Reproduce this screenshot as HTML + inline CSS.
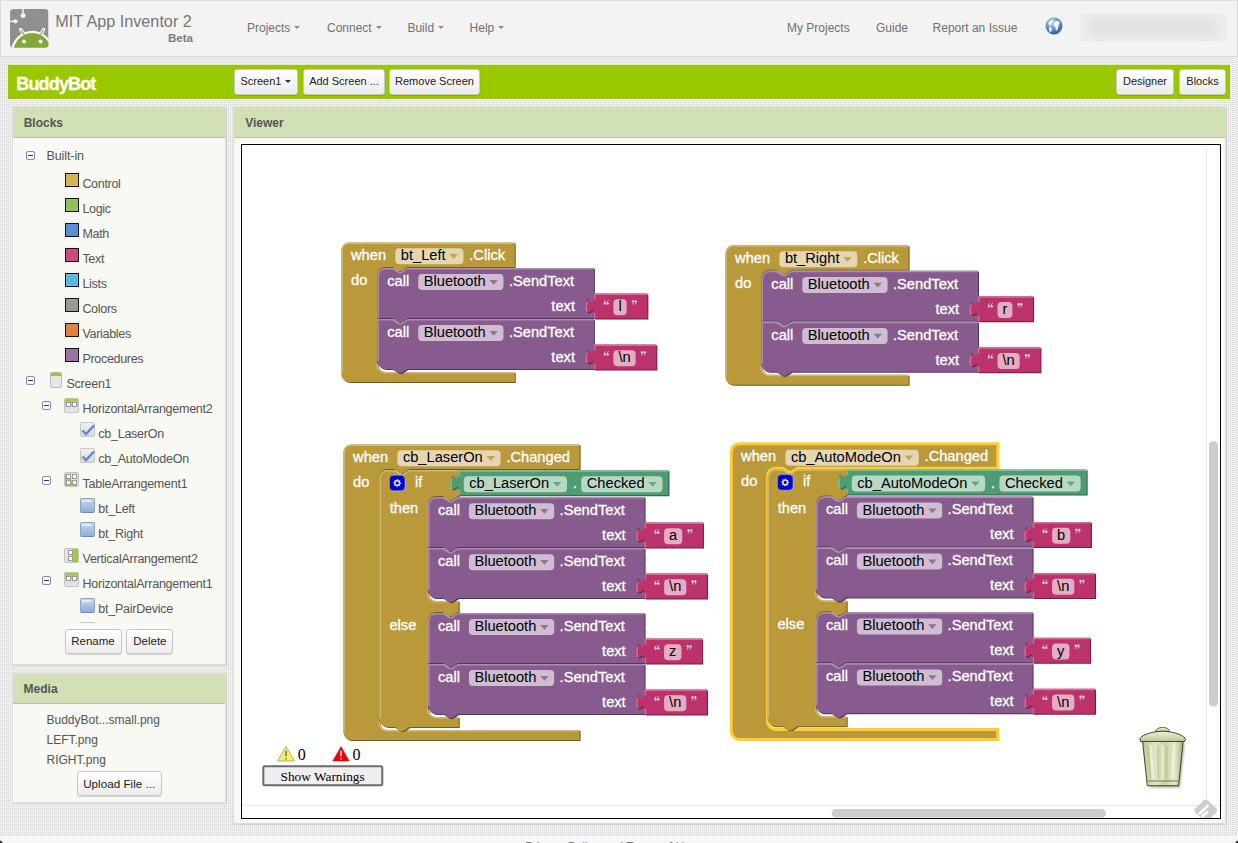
<!DOCTYPE html>
<html><head><meta charset="utf-8">
<style>
*{box-sizing:border-box;margin:0;padding:0}
html,body{width:1238px;height:843px;overflow:hidden}
body{position:relative;font-family:"Liberation Sans", sans-serif;background-color:#d6d6d6;
background-image:linear-gradient(90deg,transparent 50%,#f0f0f0 50%),linear-gradient(transparent 50%,#f0f0f0 50%);
background-size:2px 2px,2px 2px}
.a{position:absolute}
.t{position:absolute;white-space:pre;line-height:1}
.btn{position:absolute;text-align:center;color:#222;background:linear-gradient(#fff,#ececec);border:1px solid #c8c8c8;border-radius:3px;box-shadow:0 1px 1px rgba(0,0,0,.15);white-space:pre}
.caret{display:inline-block;width:0;height:0;border-left:3.5px solid transparent;border-right:3.5px solid transparent;border-top:3.5px solid #888;vertical-align:middle;margin-left:4px;margin-top:-2px}
.btn .caret{border-top-color:#333;border-left-width:3px;border-right-width:3px;border-top-width:3px}
</style></head><body>

<div class="a" style="left:0;top:0;width:1238px;height:57px;background:#f3f3f3;border:1px solid #d9d9d9;border-top-color:#e2e2e2"></div>
<svg class="a" style="left:9.5px;top:9.3px" width="39" height="39" viewBox="0 0 39 39">
<defs><clipPath id="lc"><rect x="0" y="0" width="38.5" height="38.7" rx="3.5"/></clipPath></defs>
<g clip-path="url(#lc)">
<rect x="0" y="0" width="38.5" height="38.7" fill="#8f8f90"/>
<path d="M0.6 11 V3 a2.4 2.4 0 0 1 2.4 -2.4 H10.8 a1.2 1.2 0 0 1 1.2 1.2 V11.2" fill="none" stroke="#a2a2a3" stroke-width="0.7" opacity="0.8"/>
<rect x="12.3" y="-1" width="1.5" height="6" fill="#efefef"/><circle cx="13.05" cy="6.4" r="2.5" fill="#efefef"/>
<rect x="-1" y="11.6" width="5" height="1.5" fill="#efefef"/><circle cx="5.5" cy="12.35" r="2.1" fill="#efefef"/>
<circle cx="22.3" cy="42.9" r="21.1" fill="#fff"/>
<path d="M10.7 20.5 L14.2 25.5 M33.6 20.5 L30.7 25.5" stroke="#fff" stroke-width="3.4" stroke-linecap="round"/>
<path d="M10.9 20.8 L14.2 25.5 M33.4 20.8 L30.7 25.5" stroke="#86a83a" stroke-width="1.2" stroke-linecap="round"/>
<circle cx="22.3" cy="42.9" r="18.85" fill="#86a83a"/>
<circle cx="14" cy="32.5" r="1.9" fill="#fff"/><circle cx="30.6" cy="32.5" r="1.9" fill="#fff"/>
</g></svg>
<div class="t" style="left:55.3px;top:13.39px;font-size:16.2px;color:#777;font-weight:400;">MIT App Inventor 2</div>
<div class="t" style="left:168px;top:33.04px;font-size:12px;color:#7a7a7a;font-weight:700;font-size:11.5px">Beta</div>
<div class="t" style="left:247px;top:21.84px;font-size:12px;color:#707070;font-weight:400;">Projects<span class="caret"></span></div>
<div class="t" style="left:327px;top:21.84px;font-size:12px;color:#707070;font-weight:400;">Connect<span class="caret"></span></div>
<div class="t" style="left:407.4px;top:21.84px;font-size:12px;color:#707070;font-weight:400;">Build<span class="caret"></span></div>
<div class="t" style="left:469.6px;top:21.84px;font-size:12px;color:#707070;font-weight:400;">Help<span class="caret"></span></div>
<div class="t" style="left:787px;top:21.84px;font-size:12px;color:#707070;font-weight:400;">My Projects</div>
<div class="t" style="left:876px;top:21.84px;font-size:12px;color:#707070;font-weight:400;">Guide</div>
<div class="t" style="left:932.6px;top:21.84px;font-size:12px;color:#707070;font-weight:400;">Report an Issue</div>
<svg class="a" style="left:1044.5px;top:17px" width="18" height="18" viewBox="0 0 18 18">
<defs><radialGradient id="gg" cx="0.4" cy="0.3" r="0.75"><stop offset="0" stop-color="#bcd6f2"/><stop offset="0.55" stop-color="#5f90cf"/><stop offset="1" stop-color="#2c5a9a"/></radialGradient></defs>
<circle cx="9" cy="9" r="8.4" fill="url(#gg)"/>
<path d="M3.2,6.5 C4.5,3.6 7,2.3 8.6,2.6 C8.2,4 7.8,4.6 6.6,5.2 C6,6.6 6.6,7.8 5.6,8.3 C4.6,8.6 3.8,8 3.2,6.5Z" fill="#fff" opacity="0.95"/>
<path d="M9.6,5 C11,3.4 13.4,3.6 14.6,5.2 C15.2,6.6 13.6,7 13.2,8.6 C13.6,10.6 12.4,12.6 11.4,13.8 C10.6,12.6 10.8,10.8 10,9.6 C8.6,9.4 8.4,7.6 9.2,6.8Z" fill="#fff" opacity="0.95"/>
<path d="M4,10.2 C5.6,9.8 7,10.8 7,12.6 C6.6,14.2 5.4,15.2 4.8,15.6 C4.6,14 3.6,12.6 4,10.2Z" fill="#fff" opacity="0.9"/>
<ellipse cx="9" cy="16.6" rx="5" ry="0.9" fill="#000" opacity="0.12"/>
</svg>
<div class="a" style="left:1080px;top:14px;width:146px;height:27px;background:#ececec;border-radius:1px"></div>
<div class="a" style="left:1090px;top:20px;width:126px;height:15px;background:#e0e0e0;border-radius:6px;filter:blur(4px)"></div>
<div class="a" style="left:8px;top:65px;width:1222px;height:34px;background:#9ac800"></div>
<div class="t" style="left:16.3px;top:74.56px;font-size:18px;color:#fff;font-weight:700;letter-spacing:-0.85px;-webkit-text-stroke:0.3px #fff">BuddyBot</div>
<div class="btn" style="left:234px;top:69px;width:64px;height:26px;font-size:11px;line-height:22.5px;">Screen1<span class="caret"></span></div>
<div class="btn" style="left:303px;top:69px;width:82px;height:26px;font-size:11px;line-height:22.5px;">Add Screen ...</div>
<div class="btn" style="left:389px;top:69px;width:91px;height:26px;font-size:11px;line-height:22.5px;">Remove Screen</div>
<div class="btn" style="left:1116px;top:69px;width:58px;height:26px;font-size:11px;line-height:22.5px;">Designer</div>
<div class="btn" style="left:1179px;top:69px;width:47px;height:26px;font-size:11px;line-height:22.5px;">Blocks</div>
<div class="a" style="left:12px;top:107px;width:214px;height:558px;background:#f7f9f2;border:1px solid #dcdcdc;box-shadow:1px 1px 1px rgba(0,0,0,.08)"></div>
<div class="a" style="left:13px;top:107px;width:212px;height:31px;background:#d1e0b5;border-bottom:1px solid #b9bfae"></div>
<div class="t" style="left:23.7px;top:116.54px;font-size:12px;color:#555;font-weight:700;">Blocks</div>
<div class="a" style="left:26px;top:151px;width:9px;height:9px;border:1px solid #7d87c9;border-radius:2px;background:#fff"></div><div class="a" style="left:28px;top:155px;width:5px;height:1px;background:#1a2ad0"></div>
<div class="t" style="left:46.5px;top:149.92px;font-size:12.5px;color:#555;font-weight:400;letter-spacing:-0.1px">Built-in</div>
<div class="a" style="left:65px;top:173px;width:14px;height:14px;background:#d8b454;border:1px solid #111"></div>
<div class="t" style="left:82.4px;top:177.92px;font-size:12.5px;color:#555;font-weight:400;letter-spacing:-0.3px">Control</div>
<div class="a" style="left:65px;top:198px;width:14px;height:14px;background:#92c05c;border:1px solid #111"></div>
<div class="t" style="left:82.4px;top:202.92px;font-size:12.5px;color:#555;font-weight:400;letter-spacing:-0.3px">Logic</div>
<div class="a" style="left:65px;top:223px;width:14px;height:14px;background:#5b8ed0;border:1px solid #111"></div>
<div class="t" style="left:82.4px;top:227.92px;font-size:12.5px;color:#555;font-weight:400;letter-spacing:-0.3px">Math</div>
<div class="a" style="left:65px;top:248px;width:14px;height:14px;background:#cc4a7c;border:1px solid #111"></div>
<div class="t" style="left:82.4px;top:252.92px;font-size:12.5px;color:#555;font-weight:400;letter-spacing:-0.3px">Text</div>
<div class="a" style="left:65px;top:273px;width:14px;height:14px;background:#5bb8e0;border:1px solid #111"></div>
<div class="t" style="left:82.4px;top:277.92px;font-size:12.5px;color:#555;font-weight:400;letter-spacing:-0.3px">Lists</div>
<div class="a" style="left:65px;top:298px;width:14px;height:14px;background:#999999;border:1px solid #111"></div>
<div class="t" style="left:82.4px;top:302.92px;font-size:12.5px;color:#555;font-weight:400;letter-spacing:-0.3px">Colors</div>
<div class="a" style="left:65px;top:323px;width:14px;height:14px;background:#e0823e;border:1px solid #111"></div>
<div class="t" style="left:82.4px;top:327.92px;font-size:12.5px;color:#555;font-weight:400;letter-spacing:-0.3px">Variables</div>
<div class="a" style="left:65px;top:348px;width:14px;height:14px;background:#9a72a4;border:1px solid #111"></div>
<div class="t" style="left:82.4px;top:352.92px;font-size:12.5px;color:#555;font-weight:400;letter-spacing:-0.3px">Procedures</div>
<div class="a" style="left:26px;top:376px;width:9px;height:9px;border:1px solid #7d87c9;border-radius:2px;background:#fff"></div><div class="a" style="left:28px;top:380px;width:5px;height:1px;background:#1a2ad0"></div>
<div class="a" style="left:50px;top:372px;width:12px;height:16px;border:1px solid #bbb;border-radius:2px;background:linear-gradient(#9ac43c 0,#9ac43c 3px,#e6e6e6 3px)"></div>
<div class="t" style="left:66.5px;top:377.92px;font-size:12.5px;color:#555;font-weight:400;letter-spacing:-0.25px">Screen1</div>
<div class="a" style="left:42px;top:401px;width:9px;height:9px;border:1px solid #7d87c9;border-radius:2px;background:#fff"></div><div class="a" style="left:44px;top:405px;width:5px;height:1px;background:#1a2ad0"></div>
<div class="a" style="left:64px;top:398px;width:15px;height:15px;border:1px solid #c2c2c2;border-radius:2px;background:linear-gradient(#9fcb3a,#bcd97a 7px,#dcdcdc 7px,#e8e8e8)"></div><div class="a" style="left:66px;top:402px;width:5px;height:5px;background:#fff;border:1px solid #9a9a9a"></div><div class="a" style="left:72px;top:402px;width:5px;height:5px;background:#fff;border:1px solid #9a9a9a"></div>
<div class="t" style="left:82.5px;top:402.92px;font-size:12.5px;color:#555;font-weight:400;letter-spacing:-0.25px">HorizontalArrangement2</div>
<div class="a" style="left:80px;top:422px;width:15px;height:15px;border:1px solid #c6c6c6;border-radius:2px;background:linear-gradient(#f0f0f0,#d8d8d8)"></div><svg class="a" style="left:80px;top:422px" width="16" height="16"><path d="M2.5 8.5 L6 12 L14 3.5" stroke="#5a86cc" stroke-width="2.4" fill="none"/></svg>
<div class="t" style="left:98.3px;top:427.92px;font-size:12.5px;color:#555;font-weight:400;letter-spacing:-0.25px">cb_LaserOn</div>
<div class="a" style="left:80px;top:448px;width:15px;height:15px;border:1px solid #c6c6c6;border-radius:2px;background:linear-gradient(#f0f0f0,#d8d8d8)"></div><svg class="a" style="left:80px;top:448px" width="16" height="16"><path d="M2.5 8.5 L6 12 L14 3.5" stroke="#5a86cc" stroke-width="2.4" fill="none"/></svg>
<div class="t" style="left:98.3px;top:452.92px;font-size:12.5px;color:#555;font-weight:400;letter-spacing:-0.25px">cb_AutoModeOn</div>
<div class="a" style="left:42px;top:476px;width:9px;height:9px;border:1px solid #7d87c9;border-radius:2px;background:#fff"></div><div class="a" style="left:44px;top:480px;width:5px;height:1px;background:#1a2ad0"></div>
<div class="a" style="left:64px;top:472px;width:15px;height:15px;border:1px solid #c2c2c2;border-radius:2px;background:linear-gradient(45deg,#9fcb3a 50%,#dedede 50%)"></div><div class="a" style="left:66px;top:474px;width:5px;height:5px;background:#fff;border:1px solid #9a9a9a"></div><div class="a" style="left:72px;top:474px;width:5px;height:5px;background:#fff;border:1px solid #9a9a9a"></div><div class="a" style="left:66px;top:480px;width:5px;height:5px;background:#fff;border:1px solid #9a9a9a"></div><div class="a" style="left:72px;top:480px;width:5px;height:5px;background:#fff;border:1px solid #9a9a9a"></div>
<div class="t" style="left:82.5px;top:477.92px;font-size:12.5px;color:#555;font-weight:400;letter-spacing:-0.25px">TableArrangement1</div>
<div class="a" style="left:80px;top:498px;width:15px;height:15px;border:1px solid #8ea3c2;border-bottom-color:#6d8bb8;border-radius:2px;background:linear-gradient(#c6d6ee,#a9c2e6 50%,#8eaedc)"></div><div class="a" style="left:82px;top:500px;width:9px;height:2px;background:#e6eef9;opacity:.9"></div>
<div class="t" style="left:98.3px;top:502.92px;font-size:12.5px;color:#555;font-weight:400;letter-spacing:-0.25px">bt_Left</div>
<div class="a" style="left:80px;top:522px;width:15px;height:15px;border:1px solid #8ea3c2;border-bottom-color:#6d8bb8;border-radius:2px;background:linear-gradient(#c6d6ee,#a9c2e6 50%,#8eaedc)"></div><div class="a" style="left:82px;top:524px;width:9px;height:2px;background:#e6eef9;opacity:.9"></div>
<div class="t" style="left:98.3px;top:527.92px;font-size:12.5px;color:#555;font-weight:400;letter-spacing:-0.25px">bt_Right</div>
<div class="a" style="left:64px;top:548px;width:15px;height:15px;border:1px solid #c2c2c2;border-radius:2px;background:linear-gradient(90deg,#e4e4e4,#d8d8d8 7px,#a6cf45 7px,#9fcb3a)"></div><div class="a" style="left:68px;top:550px;width:5px;height:5px;background:#fff;border:1px solid #9a9a9a"></div><div class="a" style="left:68px;top:556px;width:5px;height:5px;background:#fff;border:1px solid #9a9a9a"></div>
<div class="t" style="left:82.5px;top:552.92px;font-size:12.5px;color:#555;font-weight:400;letter-spacing:-0.25px">VerticalArrangement2</div>
<div class="a" style="left:42px;top:576px;width:9px;height:9px;border:1px solid #7d87c9;border-radius:2px;background:#fff"></div><div class="a" style="left:44px;top:580px;width:5px;height:1px;background:#1a2ad0"></div>
<div class="a" style="left:64px;top:572px;width:15px;height:15px;border:1px solid #c2c2c2;border-radius:2px;background:linear-gradient(#9fcb3a,#bcd97a 7px,#dcdcdc 7px,#e8e8e8)"></div><div class="a" style="left:66px;top:576px;width:5px;height:5px;background:#fff;border:1px solid #9a9a9a"></div><div class="a" style="left:72px;top:576px;width:5px;height:5px;background:#fff;border:1px solid #9a9a9a"></div>
<div class="t" style="left:82.5px;top:577.92px;font-size:12.5px;color:#555;font-weight:400;letter-spacing:-0.25px">HorizontalArrangement1</div>
<div class="a" style="left:80px;top:598px;width:15px;height:15px;border:1px solid #8ea3c2;border-bottom-color:#6d8bb8;border-radius:2px;background:linear-gradient(#c6d6ee,#a9c2e6 50%,#8eaedc)"></div><div class="a" style="left:82px;top:600px;width:9px;height:2px;background:#e6eef9;opacity:.9"></div>
<div class="t" style="left:98.3px;top:602.92px;font-size:12.5px;color:#555;font-weight:400;letter-spacing:-0.25px">bt_PairDevice</div>
<div class="a" style="left:80px;top:622px;width:15px;height:2px;border:1px solid #c6c6c6;border-bottom:none;border-radius:3px 3px 0 0"></div>
<div class="btn" style="left:64.5px;top:628.5px;width:57px;height:25px;font-size:11.5px;line-height:21.5px;padding-top:1px">Rename</div>
<div class="btn" style="left:126.4px;top:628.5px;width:47px;height:25px;font-size:11.5px;line-height:21.5px;padding-top:1px">Delete</div>
<div class="a" style="left:12px;top:673px;width:214px;height:130px;background:#f7f9f2;border:1px solid #dcdcdc;box-shadow:1px 1px 1px rgba(0,0,0,.08)"></div>
<div class="a" style="left:13px;top:674px;width:212px;height:30px;background:#d1e0b5;border-bottom:1px solid #b9bfae"></div>
<div class="t" style="left:23.6px;top:682.84px;font-size:12px;color:#555;font-weight:700;">Media</div>
<div class="t" style="left:46.5px;top:714.24px;font-size:12px;color:#555;font-weight:400;">BuddyBot...small.png</div>
<div class="t" style="left:46.5px;top:734.14px;font-size:12px;color:#555;font-weight:400;">LEFT.png</div>
<div class="t" style="left:46.5px;top:753.64px;font-size:12px;color:#555;font-weight:400;">RIGHT.png</div>
<div class="btn" style="left:76.7px;top:770.6px;width:85px;height:25px;font-size:11.7px;line-height:21.5px;padding-top:1px">Upload File ...</div>
<div class="a" style="left:233px;top:107px;width:993px;height:717px;background:#f7f9f2;border:1px solid #dcdcdc;box-shadow:1px 1px 1px rgba(0,0,0,.08)"></div>
<div class="a" style="left:234px;top:107px;width:991px;height:31px;background:#d1e0b5;border-bottom:1px solid #b9bfae"></div>
<div class="t" style="left:245.2px;top:116.54px;font-size:12px;color:#555;font-weight:700;">Viewer</div>
<div class="a" style="left:241px;top:144px;width:980px;height:675px;background:#fff;border:1px solid #000;box-shadow:0 0 0 1px #fff;overflow:hidden">
<svg class="a" style="left:0;top:0" width="978" height="673"><g transform="translate(-242,-145)" style="font-family:'Liberation Sans',sans-serif;font-size:14.667px"><path d="M243,805.5 H1220 M1206.5,146 V805.5" stroke="#e6e6e6" stroke-width="1" fill="none"/><rect x="1209" y="441" width="9" height="265.5" rx="4.5" fill="#cccccc"/><rect x="831.8" y="809" width="274.2" height="8.5" rx="4.25" fill="#cccccc"/><g transform="translate(1205.8,810.5)"><path d="M-2,-10.2 Q0,-11.8 2,-10.2 L10.6,-2 Q12.4,0 10.6,2 L2,10.2 Q0,11.8 -2,10.2 L-10.6,2 Q-12.4,0 -10.6,-2Z" fill="#cdcdcd"/><path d="M-6.3,3.2 L1.8,-4.6 M-3,5.8 L1.2,1.8" stroke="#fff" stroke-width="2.6" stroke-linecap="round" fill="none"/></g><g>
<defs>
<linearGradient id="tb" x1="0" x2="1" y1="0" y2="0"><stop offset="0" stop-color="#b9c48f"/><stop offset="0.3" stop-color="#dfe6c6"/><stop offset="0.55" stop-color="#c9d3a6"/><stop offset="0.8" stop-color="#e3e9cc"/><stop offset="1" stop-color="#aab47c"/></linearGradient>
<linearGradient id="tl" x1="0" x2="0" y1="0" y2="1"><stop offset="0" stop-color="#eef2dd"/><stop offset="1" stop-color="#bcc792"/></linearGradient>
<filter id="ts" x="-20%" y="-20%" width="150%" height="150%"><feGaussianBlur stdDeviation="1"/></filter>
</defs>
<path d="M1143.5,743 L1184.5,743 L1180,787.5 L1149.5,787.5Z" fill="#000" opacity="0.35" filter="url(#ts)"/>
<path d="M1142.6,741.2 L1183.1,741.2 L1178.5,785.7 L1147.3,785.7Z" fill="url(#tb)" stroke="#3f4b1e" stroke-width="1"/>
<path d="M1148,781 H1178" stroke="#56622f" stroke-width="0.8"/>
<path d="M1150.5,746 L1153,778 M1162.6,746 V779 M1174,746 L1172,778" stroke="#f4f7e8" stroke-width="2.2" opacity="0.7" stroke-linecap="round"/>
<path d="M1148,746 L1150.5,778 M1158,746 L1158.5,779 M1167,746 L1166.8,779" stroke="#a9b47c" stroke-width="1.2" opacity="0.6"/>
<path d="M1155.5,731.5 C1156,726 1169,726 1169.5,731.5Z" fill="url(#tl)" stroke="#3f4b1e" stroke-width="0.8"/>
<path d="M1140,739 C1140,736 1150,731.5 1162.5,731.2 C1175,731.5 1185.5,736 1185.5,739.5 L1184.6,741.5 H1140.5Z" fill="url(#tl)" stroke="#3f4b1e" stroke-width="1"/>
</g><path d="M286,746.5 L294.3,761 H277.6Z" fill="#f3f36b" stroke="#9c9c4a" stroke-width="0.8" stroke-linejoin="round"/><path d="M286,750.5 V756.5 M286,758 V759.5" stroke="#7a4b4b" stroke-width="1.3"/><text x="297.8" y="760" style="font-family:'Liberation Serif',serif;font-size:16px" fill="#000">0</text><path d="M341,746.7 L349.2,761 H332.8Z" fill="#f20000" stroke="#d00" stroke-width="0.6" stroke-linejoin="round"/><path d="M341,750.5 V756.5 M341,758 V759.5" stroke="#f3dede" stroke-width="1.5"/><text x="352.4" y="760" style="font-family:'Liberation Serif',serif;font-size:16px" fill="#000">0</text><rect x="263.3" y="766.2" width="119" height="19" rx="1.5" fill="#efefef" stroke="#6b6b6b" stroke-width="2"/><text x="280.5" y="781.2" style="font-family:'Liberation Serif',serif;font-size:13.333px" fill="#000">Show Warnings</text><g transform="translate(341.2,242.4)"><path transform="translate(1,1)" fill="#6F5C23" d="M 0,8 A 8,8 0 0,1 8,0 H 173.5 V 24.5 H 66.2 l -6,4 -3,0 -6,-4 h -7 a 8,8 0 0,0 -8,8 V 121.5 a 8,8 0 0,0 8,8 H 173.5 V 139.5 H 8 a 8,8 0 0,1 -8,-8 z"/><path fill="#B9993A" d="M 0,8 A 8,8 0 0,1 8,0 H 173.5 V 24.5 H 66.2 l -6,4 -3,0 -6,-4 h -7 a 8,8 0 0,0 -8,8 V 121.5 a 8,8 0 0,0 8,8 H 173.5 V 139.5 H 8 a 8,8 0 0,1 -8,-8 z"/><path fill="none" stroke="#CEB875" stroke-width="1.5" d="M 0.75,131.5 V 8 A 7.25,7.25 0 0,1 8,0.75 H 173 M 35.45,121.5 a 8.75,8.75 0 0,0 8.75,8.75 H 173"/><text x="9.8" y="17.6" fill="#fff" stroke="#fff" stroke-width="0.3">when</text><rect x="54.1" y="5.9" width="68.15" height="16" rx="4" ry="4" fill="#fff" fill-opacity="0.6"/><text x="59.6" y="17.9" fill="#000">bt_Left</text><path d="M108.25,11.7 h8.4 l-4.2,4.8 z" fill="#B9993A" fill-opacity="0.8"/><text x="128.05" y="17.6" fill="#fff" stroke="#fff" stroke-width="0.3">.Click</text><text x="9.8" y="42.5" fill="#fff" stroke="#fff" stroke-width="0.3">do</text></g><g transform="translate(377.4,267.9)"><path transform="translate(1,1)" fill="#513755" d="M 0,8 A 8,8 0 0,1 8,0 H 15 l 6,4 3,0 6,-4 H 216.5 V 25 v 5 c 0,10 -8,-8 -8,7.5 s 8,-2.5 8,7.5 V 50 H 30 l -6,4 -3,0 -6,-4 H 0 z"/><path fill="#875B8D" d="M 0,8 A 8,8 0 0,1 8,0 H 15 l 6,4 3,0 6,-4 H 216.5 V 25 v 5 c 0,10 -8,-8 -8,7.5 s 8,-2.5 8,7.5 V 50 H 30 l -6,4 -3,0 -6,-4 H 0 z"/><path fill="none" stroke="#AB8DAF" stroke-width="1.5" d="M 0.75,50 V 8 A 7.25,7.25 0 0,1 8,0.75 H 15 l 6.5,4 2,0 6.5,-4 H 216.0"/><text x="9.8" y="18" fill="#fff" stroke="#fff" stroke-width="0.3">call</text><rect x="40.8" y="6.2" width="85.28" height="16" rx="4" ry="4" fill="#fff" fill-opacity="0.6"/><text x="46.3" y="18.2" fill="#000">Bluetooth</text><path d="M112.08,12 h8.4 l-4.2,4.8 z" fill="#875B8D" fill-opacity="0.8"/><text x="131.5" y="18" fill="#fff" stroke="#fff" stroke-width="0.3">.SendText</text><text x="173.96" y="43" fill="#fff" stroke="#fff" stroke-width="0.3">text</text></g><g transform="translate(593.9,293.4)"><path transform="translate(1,1)" fill="#711F40" d="M 0,0 H 53.46 V 25 H 0 V 20 c 0,-10 -8,8 -8,-7.5 s 8,2.5 8,-7.5 z"/><path fill="#BC336B" d="M 0,0 H 53.46 V 25 H 0 V 20 c 0,-10 -8,8 -8,-7.5 s 8,2.5 8,-7.5 z"/><path fill="none" stroke="#D07097" stroke-width="1.5" d="M 0.75,24.5 V 19.5 M -7.1,18.5 q -1.3,-5 0.2,-10 M 0.75,6 V 0.75 H 52.96"/><g fill="#fff" stroke="#fff" opacity="0.92"><circle cx="11.1" cy="10.2" r="1.05" stroke="none"/><path d="M10.2,10.1 Q10.2,7.7 11.8,7" stroke-width="0.8" fill="none"/><circle cx="13.9" cy="10.2" r="1.05" stroke="none"/><path d="M13,10.1 Q13,7.7 14.6,7" stroke-width="0.8" fill="none"/></g><rect x="19.5" y="5.8" width="13.26" height="16" rx="4" ry="4" fill="#fff" fill-opacity="0.6"/><text x="24.5" y="17.8" fill="#000">l</text><g fill="#fff" stroke="#fff" opacity="0.92"><circle cx="38.86" cy="7.85" r="1.05" stroke="none"/><path d="M39.76,7.9 Q39.76,10.3 38.16,11" stroke-width="0.8" fill="none"/><circle cx="41.66" cy="7.85" r="1.05" stroke="none"/><path d="M42.56,7.9 Q42.56,10.3 40.96,11" stroke-width="0.8" fill="none"/></g></g><g transform="translate(377.4,318.9)"><path transform="translate(1,1)" fill="#513755" d="M 0,0 H 15 l 6,4 3,0 6,-4 H 216.5 V 25 v 5 c 0,10 -8,-8 -8,7.5 s 8,-2.5 8,7.5 V 50 H 30 l -6,4 -3,0 -6,-4 H 8 a 8,8 0 0,1 -8,-8 z"/><path fill="#875B8D" d="M 0,0 H 15 l 6,4 3,0 6,-4 H 216.5 V 25 v 5 c 0,10 -8,-8 -8,7.5 s 8,-2.5 8,7.5 V 50 H 30 l -6,4 -3,0 -6,-4 H 8 a 8,8 0 0,1 -8,-8 z"/><path fill="none" stroke="#AB8DAF" stroke-width="1.5" d="M 0.75,42 V 0.75 H 15 l 6.5,4 2,0 6.5,-4 H 216.0"/><text x="9.8" y="18" fill="#fff" stroke="#fff" stroke-width="0.3">call</text><rect x="40.8" y="6.2" width="85.28" height="16" rx="4" ry="4" fill="#fff" fill-opacity="0.6"/><text x="46.3" y="18.2" fill="#000">Bluetooth</text><path d="M112.08,12 h8.4 l-4.2,4.8 z" fill="#875B8D" fill-opacity="0.8"/><text x="131.5" y="18" fill="#fff" stroke="#fff" stroke-width="0.3">.SendText</text><text x="173.96" y="43" fill="#fff" stroke="#fff" stroke-width="0.3">text</text></g><g transform="translate(593.9,344.4)"><path transform="translate(1,1)" fill="#711F40" d="M 0,0 H 62.43 V 25 H 0 V 20 c 0,-10 -8,8 -8,-7.5 s 8,2.5 8,-7.5 z"/><path fill="#BC336B" d="M 0,0 H 62.43 V 25 H 0 V 20 c 0,-10 -8,8 -8,-7.5 s 8,2.5 8,-7.5 z"/><path fill="none" stroke="#D07097" stroke-width="1.5" d="M 0.75,24.5 V 19.5 M -7.1,18.5 q -1.3,-5 0.2,-10 M 0.75,6 V 0.75 H 61.93"/><g fill="#fff" stroke="#fff" opacity="0.92"><circle cx="11.1" cy="10.2" r="1.05" stroke="none"/><path d="M10.2,10.1 Q10.2,7.7 11.8,7" stroke-width="0.8" fill="none"/><circle cx="13.9" cy="10.2" r="1.05" stroke="none"/><path d="M13,10.1 Q13,7.7 14.6,7" stroke-width="0.8" fill="none"/></g><rect x="19.5" y="5.8" width="22.23" height="16" rx="4" ry="4" fill="#fff" fill-opacity="0.6"/><text x="24.5" y="17.8" fill="#000">\n</text><g fill="#fff" stroke="#fff" opacity="0.92"><circle cx="47.83" cy="7.85" r="1.05" stroke="none"/><path d="M48.73,7.9 Q48.73,10.3 47.13,11" stroke-width="0.8" fill="none"/><circle cx="50.63" cy="7.85" r="1.05" stroke="none"/><path d="M51.53,7.9 Q51.53,10.3 49.93,11" stroke-width="0.8" fill="none"/></g></g><g transform="translate(725.3,245.3)"><path transform="translate(1,1)" fill="#6F5C23" d="M 0,8 A 8,8 0 0,1 8,0 H 183.28 V 24.5 H 66.2 l -6,4 -3,0 -6,-4 h -7 a 8,8 0 0,0 -8,8 V 121.5 a 8,8 0 0,0 8,8 H 183.28 V 139.5 H 8 a 8,8 0 0,1 -8,-8 z"/><path fill="#B9993A" d="M 0,8 A 8,8 0 0,1 8,0 H 183.28 V 24.5 H 66.2 l -6,4 -3,0 -6,-4 h -7 a 8,8 0 0,0 -8,8 V 121.5 a 8,8 0 0,0 8,8 H 183.28 V 139.5 H 8 a 8,8 0 0,1 -8,-8 z"/><path fill="none" stroke="#CEB875" stroke-width="1.5" d="M 0.75,131.5 V 8 A 7.25,7.25 0 0,1 8,0.75 H 182.78 M 35.45,121.5 a 8.75,8.75 0 0,0 8.75,8.75 H 182.78"/><text x="9.8" y="17.6" fill="#fff" stroke="#fff" stroke-width="0.3">when</text><rect x="54.1" y="5.9" width="77.93" height="16" rx="4" ry="4" fill="#fff" fill-opacity="0.6"/><text x="59.6" y="17.9" fill="#000">bt_Right</text><path d="M118.03,11.7 h8.4 l-4.2,4.8 z" fill="#B9993A" fill-opacity="0.8"/><text x="137.83" y="17.6" fill="#fff" stroke="#fff" stroke-width="0.3">.Click</text><text x="9.8" y="42.5" fill="#fff" stroke="#fff" stroke-width="0.3">do</text></g><g transform="translate(761.5,270.8)"><path transform="translate(1,1)" fill="#513755" d="M 0,8 A 8,8 0 0,1 8,0 H 15 l 6,4 3,0 6,-4 H 216.5 V 25 v 5 c 0,10 -8,-8 -8,7.5 s 8,-2.5 8,7.5 V 50 H 30 l -6,4 -3,0 -6,-4 H 0 z"/><path fill="#875B8D" d="M 0,8 A 8,8 0 0,1 8,0 H 15 l 6,4 3,0 6,-4 H 216.5 V 25 v 5 c 0,10 -8,-8 -8,7.5 s 8,-2.5 8,7.5 V 50 H 30 l -6,4 -3,0 -6,-4 H 0 z"/><path fill="none" stroke="#AB8DAF" stroke-width="1.5" d="M 0.75,50 V 8 A 7.25,7.25 0 0,1 8,0.75 H 15 l 6.5,4 2,0 6.5,-4 H 216.0"/><text x="9.8" y="18" fill="#fff" stroke="#fff" stroke-width="0.3">call</text><rect x="40.8" y="6.2" width="85.28" height="16" rx="4" ry="4" fill="#fff" fill-opacity="0.6"/><text x="46.3" y="18.2" fill="#000">Bluetooth</text><path d="M112.08,12 h8.4 l-4.2,4.8 z" fill="#875B8D" fill-opacity="0.8"/><text x="131.5" y="18" fill="#fff" stroke="#fff" stroke-width="0.3">.SendText</text><text x="173.96" y="43" fill="#fff" stroke="#fff" stroke-width="0.3">text</text></g><g transform="translate(978,296.3)"><path transform="translate(1,1)" fill="#711F40" d="M 0,0 H 55.08 V 25 H 0 V 20 c 0,-10 -8,8 -8,-7.5 s 8,2.5 8,-7.5 z"/><path fill="#BC336B" d="M 0,0 H 55.08 V 25 H 0 V 20 c 0,-10 -8,8 -8,-7.5 s 8,2.5 8,-7.5 z"/><path fill="none" stroke="#D07097" stroke-width="1.5" d="M 0.75,24.5 V 19.5 M -7.1,18.5 q -1.3,-5 0.2,-10 M 0.75,6 V 0.75 H 54.58"/><g fill="#fff" stroke="#fff" opacity="0.92"><circle cx="11.1" cy="10.2" r="1.05" stroke="none"/><path d="M10.2,10.1 Q10.2,7.7 11.8,7" stroke-width="0.8" fill="none"/><circle cx="13.9" cy="10.2" r="1.05" stroke="none"/><path d="M13,10.1 Q13,7.7 14.6,7" stroke-width="0.8" fill="none"/></g><rect x="19.5" y="5.8" width="14.88" height="16" rx="4" ry="4" fill="#fff" fill-opacity="0.6"/><text x="24.5" y="17.8" fill="#000">r</text><g fill="#fff" stroke="#fff" opacity="0.92"><circle cx="40.48" cy="7.85" r="1.05" stroke="none"/><path d="M41.38,7.9 Q41.38,10.3 39.78,11" stroke-width="0.8" fill="none"/><circle cx="43.28" cy="7.85" r="1.05" stroke="none"/><path d="M44.18,7.9 Q44.18,10.3 42.58,11" stroke-width="0.8" fill="none"/></g></g><g transform="translate(761.5,321.8)"><path transform="translate(1,1)" fill="#513755" d="M 0,0 H 15 l 6,4 3,0 6,-4 H 216.5 V 25 v 5 c 0,10 -8,-8 -8,7.5 s 8,-2.5 8,7.5 V 50 H 30 l -6,4 -3,0 -6,-4 H 8 a 8,8 0 0,1 -8,-8 z"/><path fill="#875B8D" d="M 0,0 H 15 l 6,4 3,0 6,-4 H 216.5 V 25 v 5 c 0,10 -8,-8 -8,7.5 s 8,-2.5 8,7.5 V 50 H 30 l -6,4 -3,0 -6,-4 H 8 a 8,8 0 0,1 -8,-8 z"/><path fill="none" stroke="#AB8DAF" stroke-width="1.5" d="M 0.75,42 V 0.75 H 15 l 6.5,4 2,0 6.5,-4 H 216.0"/><text x="9.8" y="18" fill="#fff" stroke="#fff" stroke-width="0.3">call</text><rect x="40.8" y="6.2" width="85.28" height="16" rx="4" ry="4" fill="#fff" fill-opacity="0.6"/><text x="46.3" y="18.2" fill="#000">Bluetooth</text><path d="M112.08,12 h8.4 l-4.2,4.8 z" fill="#875B8D" fill-opacity="0.8"/><text x="131.5" y="18" fill="#fff" stroke="#fff" stroke-width="0.3">.SendText</text><text x="173.96" y="43" fill="#fff" stroke="#fff" stroke-width="0.3">text</text></g><g transform="translate(978,347.3)"><path transform="translate(1,1)" fill="#711F40" d="M 0,0 H 62.43 V 25 H 0 V 20 c 0,-10 -8,8 -8,-7.5 s 8,2.5 8,-7.5 z"/><path fill="#BC336B" d="M 0,0 H 62.43 V 25 H 0 V 20 c 0,-10 -8,8 -8,-7.5 s 8,2.5 8,-7.5 z"/><path fill="none" stroke="#D07097" stroke-width="1.5" d="M 0.75,24.5 V 19.5 M -7.1,18.5 q -1.3,-5 0.2,-10 M 0.75,6 V 0.75 H 61.93"/><g fill="#fff" stroke="#fff" opacity="0.92"><circle cx="11.1" cy="10.2" r="1.05" stroke="none"/><path d="M10.2,10.1 Q10.2,7.7 11.8,7" stroke-width="0.8" fill="none"/><circle cx="13.9" cy="10.2" r="1.05" stroke="none"/><path d="M13,10.1 Q13,7.7 14.6,7" stroke-width="0.8" fill="none"/></g><rect x="19.5" y="5.8" width="22.23" height="16" rx="4" ry="4" fill="#fff" fill-opacity="0.6"/><text x="24.5" y="17.8" fill="#000">\n</text><g fill="#fff" stroke="#fff" opacity="0.92"><circle cx="47.83" cy="7.85" r="1.05" stroke="none"/><path d="M48.73,7.9 Q48.73,10.3 47.13,11" stroke-width="0.8" fill="none"/><circle cx="50.63" cy="7.85" r="1.05" stroke="none"/><path d="M51.53,7.9 Q51.53,10.3 49.93,11" stroke-width="0.8" fill="none"/></g></g><g transform="translate(343.3,444.4)"><path transform="translate(1,1)" fill="#6F5C23" d="M 0,8 A 8,8 0 0,1 8,0 H 236.31 V 24.5 H 66.2 l -6,4 -3,0 -6,-4 h -7 a 8,8 0 0,0 -8,8 V 277.6 a 8,8 0 0,0 8,8 H 236.31 V 295.6 H 8 a 8,8 0 0,1 -8,-8 z"/><path fill="#B9993A" d="M 0,8 A 8,8 0 0,1 8,0 H 236.31 V 24.5 H 66.2 l -6,4 -3,0 -6,-4 h -7 a 8,8 0 0,0 -8,8 V 277.6 a 8,8 0 0,0 8,8 H 236.31 V 295.6 H 8 a 8,8 0 0,1 -8,-8 z"/><path fill="none" stroke="#CEB875" stroke-width="1.5" d="M 0.75,287.6 V 8 A 7.25,7.25 0 0,1 8,0.75 H 235.81 M 35.45,277.6 a 8.75,8.75 0 0,0 8.75,8.75 H 235.81"/><text x="9.8" y="17.6" fill="#fff" stroke="#fff" stroke-width="0.3">when</text><rect x="54.1" y="5.9" width="103.2" height="16" rx="4" ry="4" fill="#fff" fill-opacity="0.6"/><text x="59.6" y="17.9" fill="#000">cb_LaserOn</text><path d="M143.3,11.7 h8.4 l-4.2,4.8 z" fill="#B9993A" fill-opacity="0.8"/><text x="163.1" y="17.6" fill="#fff" stroke="#fff" stroke-width="0.3">.Changed</text><text x="9.8" y="42.5" fill="#fff" stroke="#fff" stroke-width="0.3">do</text></g><g transform="translate(379.5,469.9)"><path transform="translate(1,1)" fill="#6F5C23" d="M 0,8 A 8,8 0 0,1 8,0 H 15 l 6,4 3,0 6,-4 H 79.2 v 5 c 0,10 -8,-8 -8,7.5 s 8,-2.5 8,7.5 V 26.1 H 78.6 l -6,4 -3,0 -6,-4 h -7 a 8,8 0 0,0 -8,8 V 123.1 a 8,8 0 0,0 8,8 H 79.2 V 142 H 78.6 l -6,4 -3,0 -6,-4 h -7 a 8,8 0 0,0 -8,8 V 239 a 8,8 0 0,0 8,8 H 79.2 V 257 H 30 l -6,4 -3,0 -6,-4 H 8 a 8,8 0 0,1 -8,-8 z"/><path fill="#B9993A" d="M 0,8 A 8,8 0 0,1 8,0 H 15 l 6,4 3,0 6,-4 H 79.2 v 5 c 0,10 -8,-8 -8,7.5 s 8,-2.5 8,7.5 V 26.1 H 78.6 l -6,4 -3,0 -6,-4 h -7 a 8,8 0 0,0 -8,8 V 123.1 a 8,8 0 0,0 8,8 H 79.2 V 142 H 78.6 l -6,4 -3,0 -6,-4 h -7 a 8,8 0 0,0 -8,8 V 239 a 8,8 0 0,0 8,8 H 79.2 V 257 H 30 l -6,4 -3,0 -6,-4 H 8 a 8,8 0 0,1 -8,-8 z"/><path fill="none" stroke="#CEB875" stroke-width="1.5" d="M 0.75,249 V 8 A 7.25,7.25 0 0,1 8,0.75 H 15 l 6.5,4 2,0 6.5,-4 H 78.7 M 47.85,123.1 a 8.75,8.75 0 0,0 8.75,8.75 H 78.7 M 47.85,239 a 8.75,8.75 0 0,0 8.75,8.75 H 78.7"/><rect x="9.9" y="5.3" width="15.6" height="15.6" rx="4" ry="4" fill="#0000d0" stroke="#fff" stroke-opacity="0.35" stroke-width="1"/><path d="M17.70,9.20 L18.46,9.27 L18.85,10.33 L19.37,10.61 L20.46,10.34 L20.94,10.93 L20.47,11.95 L20.64,12.51 L21.60,13.10 L21.53,13.86 L20.47,14.25 L20.19,14.77 L20.46,15.86 L19.87,16.34 L18.85,15.87 L18.29,16.04 L17.70,17.00 L16.94,16.93 L16.55,15.87 L16.03,15.59 L14.94,15.86 L14.46,15.27 L14.93,14.25 L14.76,13.69 L13.80,13.10 L13.87,12.34 L14.93,11.95 L15.21,11.43 L14.94,10.34 L15.53,9.86 L16.55,10.33 L17.11,10.16Z M19.30,13.10 A1.6,1.6 0 1,0 16.10,13.10 A1.6,1.6 0 1,0 19.30,13.10Z" fill="#fff" fill-rule="evenodd" opacity="0.9"/><text x="35.6" y="17" fill="#fff" stroke="#fff" stroke-width="0.3">if</text><text x="10.2" y="43.5" fill="#fff" stroke="#fff" stroke-width="0.3">then</text><text x="9.9" y="159.8" fill="#fff" stroke="#fff" stroke-width="0.3">else</text></g><g transform="translate(458.7,470.2)"><path transform="translate(1,1)" fill="#2F5E44" d="M 0,0 H 209.77 V 25 H 0 V 20 c 0,-10 -8,8 -8,-7.5 s 8,2.5 8,-7.5 z"/><path fill="#4E9D72" d="M 0,0 H 209.77 V 25 H 0 V 20 c 0,-10 -8,8 -8,-7.5 s 8,2.5 8,-7.5 z"/><path fill="none" stroke="#83BA9C" stroke-width="1.5" d="M 0.75,24.5 V 19.5 M -7.1,18.5 q -1.3,-5 0.2,-10 M 0.75,6 V 0.75 H 209.27"/><rect x="5.1" y="6" width="103.2" height="16" rx="4" ry="4" fill="#fff" fill-opacity="0.6"/><text x="10.6" y="18" fill="#000">cb_LaserOn</text><path d="M94.3,11.8 h8.4 l-4.2,4.8 z" fill="#4E9D72" fill-opacity="0.8"/><text x="114.2" y="18" fill="#fff" stroke="#fff" stroke-width="0.3">.</text><rect x="122.58" y="6" width="81.19" height="16" rx="4" ry="4" fill="#fff" fill-opacity="0.6"/><text x="128.08" y="18" fill="#000">Checked</text><path d="M189.77,11.8 h8.4 l-4.2,4.8 z" fill="#4E9D72" fill-opacity="0.8"/></g><g transform="translate(428.1,497)"><path transform="translate(1,1)" fill="#513755" d="M 0,8 A 8,8 0 0,1 8,0 H 15 l 6,4 3,0 6,-4 H 216.5 V 25 v 5 c 0,10 -8,-8 -8,7.5 s 8,-2.5 8,7.5 V 50 H 30 l -6,4 -3,0 -6,-4 H 0 z"/><path fill="#875B8D" d="M 0,8 A 8,8 0 0,1 8,0 H 15 l 6,4 3,0 6,-4 H 216.5 V 25 v 5 c 0,10 -8,-8 -8,7.5 s 8,-2.5 8,7.5 V 50 H 30 l -6,4 -3,0 -6,-4 H 0 z"/><path fill="none" stroke="#AB8DAF" stroke-width="1.5" d="M 0.75,50 V 8 A 7.25,7.25 0 0,1 8,0.75 H 15 l 6.5,4 2,0 6.5,-4 H 216.0"/><text x="9.8" y="18" fill="#fff" stroke="#fff" stroke-width="0.3">call</text><rect x="40.8" y="6.2" width="85.28" height="16" rx="4" ry="4" fill="#fff" fill-opacity="0.6"/><text x="46.3" y="18.2" fill="#000">Bluetooth</text><path d="M112.08,12 h8.4 l-4.2,4.8 z" fill="#875B8D" fill-opacity="0.8"/><text x="131.5" y="18" fill="#fff" stroke="#fff" stroke-width="0.3">.SendText</text><text x="173.96" y="43" fill="#fff" stroke="#fff" stroke-width="0.3">text</text></g><g transform="translate(644.6,522.5)"><path transform="translate(1,1)" fill="#711F40" d="M 0,0 H 58.36 V 25 H 0 V 20 c 0,-10 -8,8 -8,-7.5 s 8,2.5 8,-7.5 z"/><path fill="#BC336B" d="M 0,0 H 58.36 V 25 H 0 V 20 c 0,-10 -8,8 -8,-7.5 s 8,2.5 8,-7.5 z"/><path fill="none" stroke="#D07097" stroke-width="1.5" d="M 0.75,24.5 V 19.5 M -7.1,18.5 q -1.3,-5 0.2,-10 M 0.75,6 V 0.75 H 57.86"/><g fill="#fff" stroke="#fff" opacity="0.92"><circle cx="11.1" cy="10.2" r="1.05" stroke="none"/><path d="M10.2,10.1 Q10.2,7.7 11.8,7" stroke-width="0.8" fill="none"/><circle cx="13.9" cy="10.2" r="1.05" stroke="none"/><path d="M13,10.1 Q13,7.7 14.6,7" stroke-width="0.8" fill="none"/></g><rect x="19.5" y="5.8" width="18.16" height="16" rx="4" ry="4" fill="#fff" fill-opacity="0.6"/><text x="24.5" y="17.8" fill="#000">a</text><g fill="#fff" stroke="#fff" opacity="0.92"><circle cx="43.76" cy="7.85" r="1.05" stroke="none"/><path d="M44.66,7.9 Q44.66,10.3 43.06,11" stroke-width="0.8" fill="none"/><circle cx="46.56" cy="7.85" r="1.05" stroke="none"/><path d="M47.46,7.9 Q47.46,10.3 45.86,11" stroke-width="0.8" fill="none"/></g></g><g transform="translate(428.1,548)"><path transform="translate(1,1)" fill="#513755" d="M 0,0 H 15 l 6,4 3,0 6,-4 H 216.5 V 25 v 5 c 0,10 -8,-8 -8,7.5 s 8,-2.5 8,7.5 V 50 H 30 l -6,4 -3,0 -6,-4 H 8 a 8,8 0 0,1 -8,-8 z"/><path fill="#875B8D" d="M 0,0 H 15 l 6,4 3,0 6,-4 H 216.5 V 25 v 5 c 0,10 -8,-8 -8,7.5 s 8,-2.5 8,7.5 V 50 H 30 l -6,4 -3,0 -6,-4 H 8 a 8,8 0 0,1 -8,-8 z"/><path fill="none" stroke="#AB8DAF" stroke-width="1.5" d="M 0.75,42 V 0.75 H 15 l 6.5,4 2,0 6.5,-4 H 216.0"/><text x="9.8" y="18" fill="#fff" stroke="#fff" stroke-width="0.3">call</text><rect x="40.8" y="6.2" width="85.28" height="16" rx="4" ry="4" fill="#fff" fill-opacity="0.6"/><text x="46.3" y="18.2" fill="#000">Bluetooth</text><path d="M112.08,12 h8.4 l-4.2,4.8 z" fill="#875B8D" fill-opacity="0.8"/><text x="131.5" y="18" fill="#fff" stroke="#fff" stroke-width="0.3">.SendText</text><text x="173.96" y="43" fill="#fff" stroke="#fff" stroke-width="0.3">text</text></g><g transform="translate(644.6,573.5)"><path transform="translate(1,1)" fill="#711F40" d="M 0,0 H 62.43 V 25 H 0 V 20 c 0,-10 -8,8 -8,-7.5 s 8,2.5 8,-7.5 z"/><path fill="#BC336B" d="M 0,0 H 62.43 V 25 H 0 V 20 c 0,-10 -8,8 -8,-7.5 s 8,2.5 8,-7.5 z"/><path fill="none" stroke="#D07097" stroke-width="1.5" d="M 0.75,24.5 V 19.5 M -7.1,18.5 q -1.3,-5 0.2,-10 M 0.75,6 V 0.75 H 61.93"/><g fill="#fff" stroke="#fff" opacity="0.92"><circle cx="11.1" cy="10.2" r="1.05" stroke="none"/><path d="M10.2,10.1 Q10.2,7.7 11.8,7" stroke-width="0.8" fill="none"/><circle cx="13.9" cy="10.2" r="1.05" stroke="none"/><path d="M13,10.1 Q13,7.7 14.6,7" stroke-width="0.8" fill="none"/></g><rect x="19.5" y="5.8" width="22.23" height="16" rx="4" ry="4" fill="#fff" fill-opacity="0.6"/><text x="24.5" y="17.8" fill="#000">\n</text><g fill="#fff" stroke="#fff" opacity="0.92"><circle cx="47.83" cy="7.85" r="1.05" stroke="none"/><path d="M48.73,7.9 Q48.73,10.3 47.13,11" stroke-width="0.8" fill="none"/><circle cx="50.63" cy="7.85" r="1.05" stroke="none"/><path d="M51.53,7.9 Q51.53,10.3 49.93,11" stroke-width="0.8" fill="none"/></g></g><g transform="translate(428.1,612.9)"><path transform="translate(1,1)" fill="#513755" d="M 0,8 A 8,8 0 0,1 8,0 H 15 l 6,4 3,0 6,-4 H 216.5 V 25 v 5 c 0,10 -8,-8 -8,7.5 s 8,-2.5 8,7.5 V 50 H 30 l -6,4 -3,0 -6,-4 H 0 z"/><path fill="#875B8D" d="M 0,8 A 8,8 0 0,1 8,0 H 15 l 6,4 3,0 6,-4 H 216.5 V 25 v 5 c 0,10 -8,-8 -8,7.5 s 8,-2.5 8,7.5 V 50 H 30 l -6,4 -3,0 -6,-4 H 0 z"/><path fill="none" stroke="#AB8DAF" stroke-width="1.5" d="M 0.75,50 V 8 A 7.25,7.25 0 0,1 8,0.75 H 15 l 6.5,4 2,0 6.5,-4 H 216.0"/><text x="9.8" y="18" fill="#fff" stroke="#fff" stroke-width="0.3">call</text><rect x="40.8" y="6.2" width="85.28" height="16" rx="4" ry="4" fill="#fff" fill-opacity="0.6"/><text x="46.3" y="18.2" fill="#000">Bluetooth</text><path d="M112.08,12 h8.4 l-4.2,4.8 z" fill="#875B8D" fill-opacity="0.8"/><text x="131.5" y="18" fill="#fff" stroke="#fff" stroke-width="0.3">.SendText</text><text x="173.96" y="43" fill="#fff" stroke="#fff" stroke-width="0.3">text</text></g><g transform="translate(644.6,638.4)"><path transform="translate(1,1)" fill="#711F40" d="M 0,0 H 57.53 V 25 H 0 V 20 c 0,-10 -8,8 -8,-7.5 s 8,2.5 8,-7.5 z"/><path fill="#BC336B" d="M 0,0 H 57.53 V 25 H 0 V 20 c 0,-10 -8,8 -8,-7.5 s 8,2.5 8,-7.5 z"/><path fill="none" stroke="#D07097" stroke-width="1.5" d="M 0.75,24.5 V 19.5 M -7.1,18.5 q -1.3,-5 0.2,-10 M 0.75,6 V 0.75 H 57.03"/><g fill="#fff" stroke="#fff" opacity="0.92"><circle cx="11.1" cy="10.2" r="1.05" stroke="none"/><path d="M10.2,10.1 Q10.2,7.7 11.8,7" stroke-width="0.8" fill="none"/><circle cx="13.9" cy="10.2" r="1.05" stroke="none"/><path d="M13,10.1 Q13,7.7 14.6,7" stroke-width="0.8" fill="none"/></g><rect x="19.5" y="5.8" width="17.33" height="16" rx="4" ry="4" fill="#fff" fill-opacity="0.6"/><text x="24.5" y="17.8" fill="#000">z</text><g fill="#fff" stroke="#fff" opacity="0.92"><circle cx="42.93" cy="7.85" r="1.05" stroke="none"/><path d="M43.83,7.9 Q43.83,10.3 42.23,11" stroke-width="0.8" fill="none"/><circle cx="45.73" cy="7.85" r="1.05" stroke="none"/><path d="M46.63,7.9 Q46.63,10.3 45.03,11" stroke-width="0.8" fill="none"/></g></g><g transform="translate(428.1,663.9)"><path transform="translate(1,1)" fill="#513755" d="M 0,0 H 15 l 6,4 3,0 6,-4 H 216.5 V 25 v 5 c 0,10 -8,-8 -8,7.5 s 8,-2.5 8,7.5 V 50 H 30 l -6,4 -3,0 -6,-4 H 8 a 8,8 0 0,1 -8,-8 z"/><path fill="#875B8D" d="M 0,0 H 15 l 6,4 3,0 6,-4 H 216.5 V 25 v 5 c 0,10 -8,-8 -8,7.5 s 8,-2.5 8,7.5 V 50 H 30 l -6,4 -3,0 -6,-4 H 8 a 8,8 0 0,1 -8,-8 z"/><path fill="none" stroke="#AB8DAF" stroke-width="1.5" d="M 0.75,42 V 0.75 H 15 l 6.5,4 2,0 6.5,-4 H 216.0"/><text x="9.8" y="18" fill="#fff" stroke="#fff" stroke-width="0.3">call</text><rect x="40.8" y="6.2" width="85.28" height="16" rx="4" ry="4" fill="#fff" fill-opacity="0.6"/><text x="46.3" y="18.2" fill="#000">Bluetooth</text><path d="M112.08,12 h8.4 l-4.2,4.8 z" fill="#875B8D" fill-opacity="0.8"/><text x="131.5" y="18" fill="#fff" stroke="#fff" stroke-width="0.3">.SendText</text><text x="173.96" y="43" fill="#fff" stroke="#fff" stroke-width="0.3">text</text></g><g transform="translate(644.6,689.4)"><path transform="translate(1,1)" fill="#711F40" d="M 0,0 H 62.43 V 25 H 0 V 20 c 0,-10 -8,8 -8,-7.5 s 8,2.5 8,-7.5 z"/><path fill="#BC336B" d="M 0,0 H 62.43 V 25 H 0 V 20 c 0,-10 -8,8 -8,-7.5 s 8,2.5 8,-7.5 z"/><path fill="none" stroke="#D07097" stroke-width="1.5" d="M 0.75,24.5 V 19.5 M -7.1,18.5 q -1.3,-5 0.2,-10 M 0.75,6 V 0.75 H 61.93"/><g fill="#fff" stroke="#fff" opacity="0.92"><circle cx="11.1" cy="10.2" r="1.05" stroke="none"/><path d="M10.2,10.1 Q10.2,7.7 11.8,7" stroke-width="0.8" fill="none"/><circle cx="13.9" cy="10.2" r="1.05" stroke="none"/><path d="M13,10.1 Q13,7.7 14.6,7" stroke-width="0.8" fill="none"/></g><rect x="19.5" y="5.8" width="22.23" height="16" rx="4" ry="4" fill="#fff" fill-opacity="0.6"/><text x="24.5" y="17.8" fill="#000">\n</text><g fill="#fff" stroke="#fff" opacity="0.92"><circle cx="47.83" cy="7.85" r="1.05" stroke="none"/><path d="M48.73,7.9 Q48.73,10.3 47.13,11" stroke-width="0.8" fill="none"/><circle cx="50.63" cy="7.85" r="1.05" stroke="none"/><path d="M51.53,7.9 Q51.53,10.3 49.93,11" stroke-width="0.8" fill="none"/></g></g><g transform="translate(731.3,443.8)"><path transform="translate(1,1)" fill="#6F5C23" d="M 0,8 A 8,8 0 0,1 8,0 H 266.48 V 24.5 H 66.2 l -6,4 -3,0 -6,-4 h -7 a 8,8 0 0,0 -8,8 V 277.6 a 8,8 0 0,0 8,8 H 266.48 V 295.6 H 8 a 8,8 0 0,1 -8,-8 z"/><path fill="#B9993A" stroke="#fc3" stroke-width="3" d="M 0,8 A 8,8 0 0,1 8,0 H 266.48 V 24.5 H 66.2 l -6,4 -3,0 -6,-4 h -7 a 8,8 0 0,0 -8,8 V 277.6 a 8,8 0 0,0 8,8 H 266.48 V 295.6 H 8 a 8,8 0 0,1 -8,-8 z"/><text x="9.8" y="17.6" fill="#fff" stroke="#fff" stroke-width="0.3">when</text><rect x="54.1" y="5.9" width="133.37" height="16" rx="4" ry="4" fill="#fff" fill-opacity="0.6"/><text x="59.6" y="17.9" fill="#000">cb_AutoModeOn</text><path d="M173.47,11.7 h8.4 l-4.2,4.8 z" fill="#B9993A" fill-opacity="0.8"/><text x="193.27" y="17.6" fill="#fff" stroke="#fff" stroke-width="0.3">.Changed</text><text x="9.8" y="42.5" fill="#fff" stroke="#fff" stroke-width="0.3">do</text></g><g transform="translate(767.5,469.3)"><path transform="translate(1,1)" fill="#6F5C23" d="M 0,8 A 8,8 0 0,1 8,0 H 15 l 6,4 3,0 6,-4 H 79.2 v 5 c 0,10 -8,-8 -8,7.5 s 8,-2.5 8,7.5 V 26.1 H 78.6 l -6,4 -3,0 -6,-4 h -7 a 8,8 0 0,0 -8,8 V 123.1 a 8,8 0 0,0 8,8 H 79.2 V 142 H 78.6 l -6,4 -3,0 -6,-4 h -7 a 8,8 0 0,0 -8,8 V 239 a 8,8 0 0,0 8,8 H 79.2 V 257 H 30 l -6,4 -3,0 -6,-4 H 8 a 8,8 0 0,1 -8,-8 z"/><path fill="#B9993A" d="M 0,8 A 8,8 0 0,1 8,0 H 15 l 6,4 3,0 6,-4 H 79.2 v 5 c 0,10 -8,-8 -8,7.5 s 8,-2.5 8,7.5 V 26.1 H 78.6 l -6,4 -3,0 -6,-4 h -7 a 8,8 0 0,0 -8,8 V 123.1 a 8,8 0 0,0 8,8 H 79.2 V 142 H 78.6 l -6,4 -3,0 -6,-4 h -7 a 8,8 0 0,0 -8,8 V 239 a 8,8 0 0,0 8,8 H 79.2 V 257 H 30 l -6,4 -3,0 -6,-4 H 8 a 8,8 0 0,1 -8,-8 z"/><path fill="none" stroke="#CEB875" stroke-width="1.5" d="M 0.75,249 V 8 A 7.25,7.25 0 0,1 8,0.75 H 15 l 6.5,4 2,0 6.5,-4 H 78.7 M 47.85,123.1 a 8.75,8.75 0 0,0 8.75,8.75 H 78.7 M 47.85,239 a 8.75,8.75 0 0,0 8.75,8.75 H 78.7"/><rect x="9.9" y="5.3" width="15.6" height="15.6" rx="4" ry="4" fill="#0000d0" stroke="#fff" stroke-opacity="0.35" stroke-width="1"/><path d="M17.70,9.20 L18.46,9.27 L18.85,10.33 L19.37,10.61 L20.46,10.34 L20.94,10.93 L20.47,11.95 L20.64,12.51 L21.60,13.10 L21.53,13.86 L20.47,14.25 L20.19,14.77 L20.46,15.86 L19.87,16.34 L18.85,15.87 L18.29,16.04 L17.70,17.00 L16.94,16.93 L16.55,15.87 L16.03,15.59 L14.94,15.86 L14.46,15.27 L14.93,14.25 L14.76,13.69 L13.80,13.10 L13.87,12.34 L14.93,11.95 L15.21,11.43 L14.94,10.34 L15.53,9.86 L16.55,10.33 L17.11,10.16Z M19.30,13.10 A1.6,1.6 0 1,0 16.10,13.10 A1.6,1.6 0 1,0 19.30,13.10Z" fill="#fff" fill-rule="evenodd" opacity="0.9"/><text x="35.6" y="17" fill="#fff" stroke="#fff" stroke-width="0.3">if</text><text x="10.2" y="43.5" fill="#fff" stroke="#fff" stroke-width="0.3">then</text><text x="9.9" y="159.8" fill="#fff" stroke="#fff" stroke-width="0.3">else</text></g><g transform="translate(846.7,469.6)"><path transform="translate(1,1)" fill="#2F5E44" d="M 0,0 H 239.94 V 25 H 0 V 20 c 0,-10 -8,8 -8,-7.5 s 8,2.5 8,-7.5 z"/><path fill="#4E9D72" d="M 0,0 H 239.94 V 25 H 0 V 20 c 0,-10 -8,8 -8,-7.5 s 8,2.5 8,-7.5 z"/><path fill="none" stroke="#83BA9C" stroke-width="1.5" d="M 0.75,24.5 V 19.5 M -7.1,18.5 q -1.3,-5 0.2,-10 M 0.75,6 V 0.75 H 239.44"/><rect x="5.1" y="6" width="133.37" height="16" rx="4" ry="4" fill="#fff" fill-opacity="0.6"/><text x="10.6" y="18" fill="#000">cb_AutoModeOn</text><path d="M124.47,11.8 h8.4 l-4.2,4.8 z" fill="#4E9D72" fill-opacity="0.8"/><text x="144.37" y="18" fill="#fff" stroke="#fff" stroke-width="0.3">.</text><rect x="152.75" y="6" width="81.19" height="16" rx="4" ry="4" fill="#fff" fill-opacity="0.6"/><text x="158.25" y="18" fill="#000">Checked</text><path d="M219.94,11.8 h8.4 l-4.2,4.8 z" fill="#4E9D72" fill-opacity="0.8"/></g><g transform="translate(816.1,496.4)"><path transform="translate(1,1)" fill="#513755" d="M 0,8 A 8,8 0 0,1 8,0 H 15 l 6,4 3,0 6,-4 H 216.5 V 25 v 5 c 0,10 -8,-8 -8,7.5 s 8,-2.5 8,7.5 V 50 H 30 l -6,4 -3,0 -6,-4 H 0 z"/><path fill="#875B8D" d="M 0,8 A 8,8 0 0,1 8,0 H 15 l 6,4 3,0 6,-4 H 216.5 V 25 v 5 c 0,10 -8,-8 -8,7.5 s 8,-2.5 8,7.5 V 50 H 30 l -6,4 -3,0 -6,-4 H 0 z"/><path fill="none" stroke="#AB8DAF" stroke-width="1.5" d="M 0.75,50 V 8 A 7.25,7.25 0 0,1 8,0.75 H 15 l 6.5,4 2,0 6.5,-4 H 216.0"/><text x="9.8" y="18" fill="#fff" stroke="#fff" stroke-width="0.3">call</text><rect x="40.8" y="6.2" width="85.28" height="16" rx="4" ry="4" fill="#fff" fill-opacity="0.6"/><text x="46.3" y="18.2" fill="#000">Bluetooth</text><path d="M112.08,12 h8.4 l-4.2,4.8 z" fill="#875B8D" fill-opacity="0.8"/><text x="131.5" y="18" fill="#fff" stroke="#fff" stroke-width="0.3">.SendText</text><text x="173.96" y="43" fill="#fff" stroke="#fff" stroke-width="0.3">text</text></g><g transform="translate(1032.6,521.9)"><path transform="translate(1,1)" fill="#711F40" d="M 0,0 H 58.36 V 25 H 0 V 20 c 0,-10 -8,8 -8,-7.5 s 8,2.5 8,-7.5 z"/><path fill="#BC336B" d="M 0,0 H 58.36 V 25 H 0 V 20 c 0,-10 -8,8 -8,-7.5 s 8,2.5 8,-7.5 z"/><path fill="none" stroke="#D07097" stroke-width="1.5" d="M 0.75,24.5 V 19.5 M -7.1,18.5 q -1.3,-5 0.2,-10 M 0.75,6 V 0.75 H 57.86"/><g fill="#fff" stroke="#fff" opacity="0.92"><circle cx="11.1" cy="10.2" r="1.05" stroke="none"/><path d="M10.2,10.1 Q10.2,7.7 11.8,7" stroke-width="0.8" fill="none"/><circle cx="13.9" cy="10.2" r="1.05" stroke="none"/><path d="M13,10.1 Q13,7.7 14.6,7" stroke-width="0.8" fill="none"/></g><rect x="19.5" y="5.8" width="18.16" height="16" rx="4" ry="4" fill="#fff" fill-opacity="0.6"/><text x="24.5" y="17.8" fill="#000">b</text><g fill="#fff" stroke="#fff" opacity="0.92"><circle cx="43.76" cy="7.85" r="1.05" stroke="none"/><path d="M44.66,7.9 Q44.66,10.3 43.06,11" stroke-width="0.8" fill="none"/><circle cx="46.56" cy="7.85" r="1.05" stroke="none"/><path d="M47.46,7.9 Q47.46,10.3 45.86,11" stroke-width="0.8" fill="none"/></g></g><g transform="translate(816.1,547.4)"><path transform="translate(1,1)" fill="#513755" d="M 0,0 H 15 l 6,4 3,0 6,-4 H 216.5 V 25 v 5 c 0,10 -8,-8 -8,7.5 s 8,-2.5 8,7.5 V 50 H 30 l -6,4 -3,0 -6,-4 H 8 a 8,8 0 0,1 -8,-8 z"/><path fill="#875B8D" d="M 0,0 H 15 l 6,4 3,0 6,-4 H 216.5 V 25 v 5 c 0,10 -8,-8 -8,7.5 s 8,-2.5 8,7.5 V 50 H 30 l -6,4 -3,0 -6,-4 H 8 a 8,8 0 0,1 -8,-8 z"/><path fill="none" stroke="#AB8DAF" stroke-width="1.5" d="M 0.75,42 V 0.75 H 15 l 6.5,4 2,0 6.5,-4 H 216.0"/><text x="9.8" y="18" fill="#fff" stroke="#fff" stroke-width="0.3">call</text><rect x="40.8" y="6.2" width="85.28" height="16" rx="4" ry="4" fill="#fff" fill-opacity="0.6"/><text x="46.3" y="18.2" fill="#000">Bluetooth</text><path d="M112.08,12 h8.4 l-4.2,4.8 z" fill="#875B8D" fill-opacity="0.8"/><text x="131.5" y="18" fill="#fff" stroke="#fff" stroke-width="0.3">.SendText</text><text x="173.96" y="43" fill="#fff" stroke="#fff" stroke-width="0.3">text</text></g><g transform="translate(1032.6,572.9)"><path transform="translate(1,1)" fill="#711F40" d="M 0,0 H 62.43 V 25 H 0 V 20 c 0,-10 -8,8 -8,-7.5 s 8,2.5 8,-7.5 z"/><path fill="#BC336B" d="M 0,0 H 62.43 V 25 H 0 V 20 c 0,-10 -8,8 -8,-7.5 s 8,2.5 8,-7.5 z"/><path fill="none" stroke="#D07097" stroke-width="1.5" d="M 0.75,24.5 V 19.5 M -7.1,18.5 q -1.3,-5 0.2,-10 M 0.75,6 V 0.75 H 61.93"/><g fill="#fff" stroke="#fff" opacity="0.92"><circle cx="11.1" cy="10.2" r="1.05" stroke="none"/><path d="M10.2,10.1 Q10.2,7.7 11.8,7" stroke-width="0.8" fill="none"/><circle cx="13.9" cy="10.2" r="1.05" stroke="none"/><path d="M13,10.1 Q13,7.7 14.6,7" stroke-width="0.8" fill="none"/></g><rect x="19.5" y="5.8" width="22.23" height="16" rx="4" ry="4" fill="#fff" fill-opacity="0.6"/><text x="24.5" y="17.8" fill="#000">\n</text><g fill="#fff" stroke="#fff" opacity="0.92"><circle cx="47.83" cy="7.85" r="1.05" stroke="none"/><path d="M48.73,7.9 Q48.73,10.3 47.13,11" stroke-width="0.8" fill="none"/><circle cx="50.63" cy="7.85" r="1.05" stroke="none"/><path d="M51.53,7.9 Q51.53,10.3 49.93,11" stroke-width="0.8" fill="none"/></g></g><g transform="translate(816.1,612.3)"><path transform="translate(1,1)" fill="#513755" d="M 0,8 A 8,8 0 0,1 8,0 H 15 l 6,4 3,0 6,-4 H 216.5 V 25 v 5 c 0,10 -8,-8 -8,7.5 s 8,-2.5 8,7.5 V 50 H 30 l -6,4 -3,0 -6,-4 H 0 z"/><path fill="#875B8D" d="M 0,8 A 8,8 0 0,1 8,0 H 15 l 6,4 3,0 6,-4 H 216.5 V 25 v 5 c 0,10 -8,-8 -8,7.5 s 8,-2.5 8,7.5 V 50 H 30 l -6,4 -3,0 -6,-4 H 0 z"/><path fill="none" stroke="#AB8DAF" stroke-width="1.5" d="M 0.75,50 V 8 A 7.25,7.25 0 0,1 8,0.75 H 15 l 6.5,4 2,0 6.5,-4 H 216.0"/><text x="9.8" y="18" fill="#fff" stroke="#fff" stroke-width="0.3">call</text><rect x="40.8" y="6.2" width="85.28" height="16" rx="4" ry="4" fill="#fff" fill-opacity="0.6"/><text x="46.3" y="18.2" fill="#000">Bluetooth</text><path d="M112.08,12 h8.4 l-4.2,4.8 z" fill="#875B8D" fill-opacity="0.8"/><text x="131.5" y="18" fill="#fff" stroke="#fff" stroke-width="0.3">.SendText</text><text x="173.96" y="43" fill="#fff" stroke="#fff" stroke-width="0.3">text</text></g><g transform="translate(1032.6,637.8)"><path transform="translate(1,1)" fill="#711F40" d="M 0,0 H 57.53 V 25 H 0 V 20 c 0,-10 -8,8 -8,-7.5 s 8,2.5 8,-7.5 z"/><path fill="#BC336B" d="M 0,0 H 57.53 V 25 H 0 V 20 c 0,-10 -8,8 -8,-7.5 s 8,2.5 8,-7.5 z"/><path fill="none" stroke="#D07097" stroke-width="1.5" d="M 0.75,24.5 V 19.5 M -7.1,18.5 q -1.3,-5 0.2,-10 M 0.75,6 V 0.75 H 57.03"/><g fill="#fff" stroke="#fff" opacity="0.92"><circle cx="11.1" cy="10.2" r="1.05" stroke="none"/><path d="M10.2,10.1 Q10.2,7.7 11.8,7" stroke-width="0.8" fill="none"/><circle cx="13.9" cy="10.2" r="1.05" stroke="none"/><path d="M13,10.1 Q13,7.7 14.6,7" stroke-width="0.8" fill="none"/></g><rect x="19.5" y="5.8" width="17.33" height="16" rx="4" ry="4" fill="#fff" fill-opacity="0.6"/><text x="24.5" y="17.8" fill="#000">y</text><g fill="#fff" stroke="#fff" opacity="0.92"><circle cx="42.93" cy="7.85" r="1.05" stroke="none"/><path d="M43.83,7.9 Q43.83,10.3 42.23,11" stroke-width="0.8" fill="none"/><circle cx="45.73" cy="7.85" r="1.05" stroke="none"/><path d="M46.63,7.9 Q46.63,10.3 45.03,11" stroke-width="0.8" fill="none"/></g></g><g transform="translate(816.1,663.3)"><path transform="translate(1,1)" fill="#513755" d="M 0,0 H 15 l 6,4 3,0 6,-4 H 216.5 V 25 v 5 c 0,10 -8,-8 -8,7.5 s 8,-2.5 8,7.5 V 50 H 30 l -6,4 -3,0 -6,-4 H 8 a 8,8 0 0,1 -8,-8 z"/><path fill="#875B8D" d="M 0,0 H 15 l 6,4 3,0 6,-4 H 216.5 V 25 v 5 c 0,10 -8,-8 -8,7.5 s 8,-2.5 8,7.5 V 50 H 30 l -6,4 -3,0 -6,-4 H 8 a 8,8 0 0,1 -8,-8 z"/><path fill="none" stroke="#AB8DAF" stroke-width="1.5" d="M 0.75,42 V 0.75 H 15 l 6.5,4 2,0 6.5,-4 H 216.0"/><text x="9.8" y="18" fill="#fff" stroke="#fff" stroke-width="0.3">call</text><rect x="40.8" y="6.2" width="85.28" height="16" rx="4" ry="4" fill="#fff" fill-opacity="0.6"/><text x="46.3" y="18.2" fill="#000">Bluetooth</text><path d="M112.08,12 h8.4 l-4.2,4.8 z" fill="#875B8D" fill-opacity="0.8"/><text x="131.5" y="18" fill="#fff" stroke="#fff" stroke-width="0.3">.SendText</text><text x="173.96" y="43" fill="#fff" stroke="#fff" stroke-width="0.3">text</text></g><g transform="translate(1032.6,688.8)"><path transform="translate(1,1)" fill="#711F40" d="M 0,0 H 62.43 V 25 H 0 V 20 c 0,-10 -8,8 -8,-7.5 s 8,2.5 8,-7.5 z"/><path fill="#BC336B" d="M 0,0 H 62.43 V 25 H 0 V 20 c 0,-10 -8,8 -8,-7.5 s 8,2.5 8,-7.5 z"/><path fill="none" stroke="#D07097" stroke-width="1.5" d="M 0.75,24.5 V 19.5 M -7.1,18.5 q -1.3,-5 0.2,-10 M 0.75,6 V 0.75 H 61.93"/><g fill="#fff" stroke="#fff" opacity="0.92"><circle cx="11.1" cy="10.2" r="1.05" stroke="none"/><path d="M10.2,10.1 Q10.2,7.7 11.8,7" stroke-width="0.8" fill="none"/><circle cx="13.9" cy="10.2" r="1.05" stroke="none"/><path d="M13,10.1 Q13,7.7 14.6,7" stroke-width="0.8" fill="none"/></g><rect x="19.5" y="5.8" width="22.23" height="16" rx="4" ry="4" fill="#fff" fill-opacity="0.6"/><text x="24.5" y="17.8" fill="#000">\n</text><g fill="#fff" stroke="#fff" opacity="0.92"><circle cx="47.83" cy="7.85" r="1.05" stroke="none"/><path d="M48.73,7.9 Q48.73,10.3 47.13,11" stroke-width="0.8" fill="none"/><circle cx="50.63" cy="7.85" r="1.05" stroke="none"/><path d="M51.53,7.9 Q51.53,10.3 49.93,11" stroke-width="0.8" fill="none"/></g></g></g></svg>
</div>
<div class="a" style="left:0;top:836px;width:1238px;height:7px;background:#f7f7f7"></div>
<div class="t" style="left:525px;top:840.64px;font-size:12px;color:#777;font-weight:400;">Privacy Policy and Terms of Use</div>
<svg class="a" style="left:0;top:836px" width="6" height="7"><circle cx="0" cy="7" r="3.2" fill="#3a3f48" stroke="#fff" stroke-width="1.2"/></svg>
<svg class="a" style="left:1232px;top:836px" width="6" height="7"><circle cx="6" cy="7" r="3.2" fill="#3a3f48" stroke="#fff" stroke-width="1.2"/></svg>
</body></html>
